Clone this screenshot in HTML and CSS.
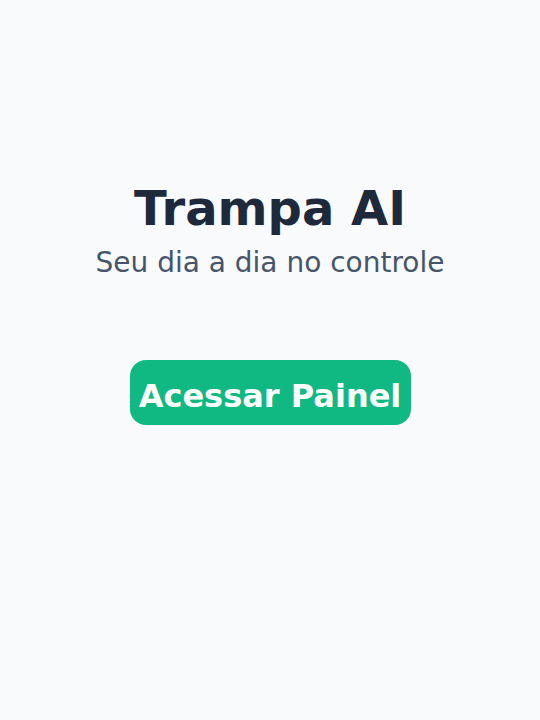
FILE: index.html
```html
<!DOCTYPE html>
<html lang="pt">
<head>
<meta charset="utf-8">
<link rel="stylesheet" href="styles.css">
<title>Trampa AI</title>
</head>
<body>
<main class="hero">
  <h1 class="title">Trampa AI</h1>
  <p class="subtitle">Seu dia a dia no controle</p>
  <button class="cta">Acessar Painel</button>
</main>
</body>
</html>
```
FILE: styles.css
```css
html, body {
  margin: 0;
  padding: 0;
  background: #f8fafc;
  font-family: "DejaVu Sans", sans-serif;
}
.hero {
  height: 720px;
  display: flex;
  flex-direction: column;
  align-items: center;
  padding-top: 180px;
  box-sizing: border-box;
}
.title {
  margin: 0;
  font-size: 48px;
  line-height: 56px;
  font-weight: 700;
  color: #1e293b;
}
.subtitle {
  margin: 10px 0 0;
  font-size: 28px;
  line-height: 34px;
  color: #475569;
}
.cta {
  margin-top: 80px;
  width: 281px;
  height: 65px;
  border: none;
  border-radius: 16px;
  background: #10b981;
  color: #ffffff;
  font-family: "DejaVu Sans", sans-serif;
  font-size: 32px;
  font-weight: 700;
  padding: 6px 0 0;
}
```
